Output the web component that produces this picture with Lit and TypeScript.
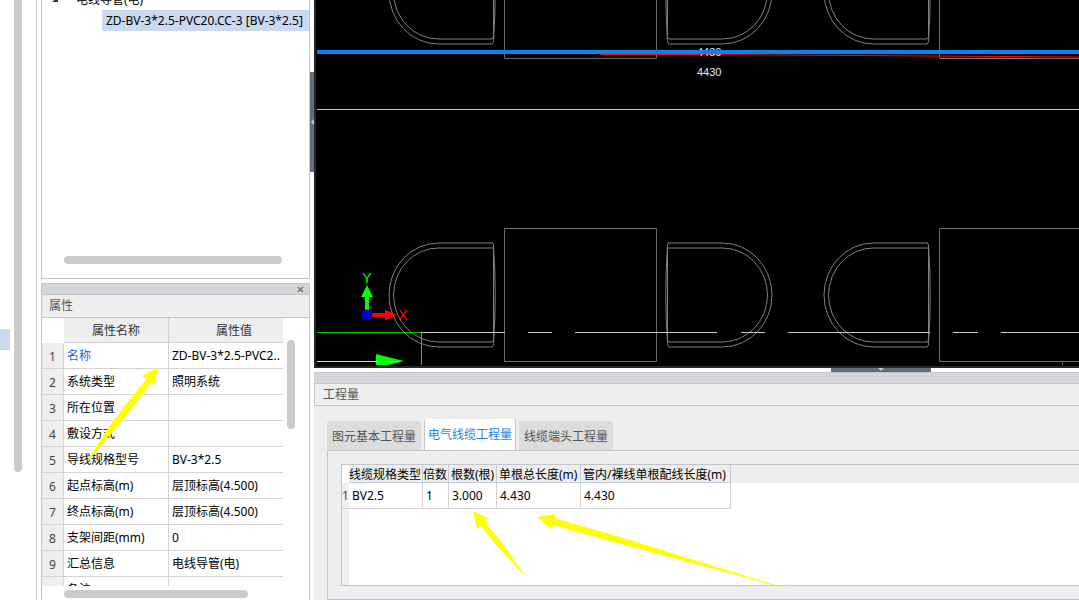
import { LitElement, html, svg, css } from "lit";
import { customElement, state } from "lit/decorators.js";

interface Prop {
  name: string;
  value: string;
  key?: boolean;
}

const PROPS: Prop[] = [
  { name: "名称", value: "ZD-BV-3*2.5-PVC2..", key: true },
  { name: "系统类型", value: "照明系统" },
  { name: "所在位置", value: "" },
  { name: "敷设方式", value: "" },
  { name: "导线规格型号", value: "BV-3*2.5" },
  { name: "起点标高(m)", value: "层顶标高(4.500)" },
  { name: "终点标高(m)", value: "层顶标高(4.500)" },
  { name: "支架间距(mm)", value: "0" },
  { name: "汇总信息", value: "电线导管(电)" },
  { name: "备注", value: "" },
];

const TABS = ["图元基本工程量", "电气线缆工程量", "线缆端头工程量"];

const base = css`
  * {
    box-sizing: border-box;
  }
  button {
    font: inherit;
    border: 0;
    padding: 0;
    margin: 0;
    cursor: pointer;
  }
  table {
    border-collapse: separate;
    border-spacing: 0;
    table-layout: fixed;
  }
  th,
  td {
    padding: 0;
    font-weight: 400;
    text-align: left;
    white-space: nowrap;
    overflow: hidden;
  }
  .thumb {
    background: #cbcbcb;
    border-radius: 4px;
  }
  .title {
    margin: 0;
    font-size: 12px;
    font-weight: 400;
    color: #555;
    background: #eee;
    height: 22px;
    line-height: 22px;
    padding-left: 8px;
  }
`;

@customElement("tree-panel")
class TreePanel extends LitElement {
  static styles = [
    base,
    css`
      :host {
        display: flex;
        flex-direction: column;
        overflow: hidden;
        border: 1px solid #c2c5ca;
        border-top: 0;
        background: #fff;
      }
      ul {
        list-style: none;
        margin: -11px 0 0;
        padding: 0;
        flex: 1;
      }
      li {
        display: flex;
        align-items: center;
        height: 21px;
        white-space: nowrap;
      }
      .parent {
        padding-left: 10px;
        gap: 18px;
      }
      .child {
        margin-left: 60px;
        padding-left: 4px;
        background: #c9d9f0;
      }
      .thumb {
        height: 8px;
        margin: 0 27px 14px 22px;
      }
    `,
  ];

  render() {
    return html`
      <ul>
        <li class="parent">
          <svg width="6" height="6" viewBox="0 0 6 6"><path d="M6 0V5H0z" fill="#333" /></svg>
          <span>电线导管(电)</span>
        </li>
        <li class="child">ZD-BV-3*2.5-PVC20.CC-3 [BV-3*2.5]</li>
      </ul>
      <div class="thumb"></div>
    `;
  }
}

@customElement("property-panel")
class PropertyPanel extends LitElement {
  static styles = [
    base,
    css`
      :host {
        display: flex;
        flex-direction: column;
        overflow: hidden;
        border: 1px solid #c2c5ca;
        border-bottom: 0;
        background: #fff;
      }
      .bar {
        display: flex;
        justify-content: flex-end;
        align-items: center;
        height: 11px;
        padding-right: 5px;
        background: #d3d5da;
        border-bottom: 1px solid #c2c5ca;
      }
      .close {
        display: flex;
        background: none;
      }
      .title {
        border-bottom: 1px solid #c2c5ca;
        height: 23px;
        padding-left: 7px;
      }
      .grid {
        flex: 1;
        display: flex;
        min-height: 0;
      }
      .view {
        flex: 1;
        min-width: 0;
        overflow: hidden;
      }
      table {
        width: 258px;
      }
      .c0 {
        width: 22px;
      }
      .c1 {
        width: 105px;
      }
      tr {
        height: 26px;
      }
      th,
      td {
        height: 26px;
        border-right: 1px solid #d3d3d3;
        border-bottom: 1px solid #d3d3d3;
        padding-left: 3px;
      }
      thead tr,
      thead td,
      thead th {
        height: 25px;
      }
      thead th {
        background: #eee;
        color: #333;
        text-align: center;
        padding: 2px 0 0;
      }
      thead td {
        border-color: #fff;
      }
      tbody th {
        background: #eee;
        color: #444;
        text-align: center;
        padding: 2px 0 0;
      }
      .key {
        color: #1a5fe8;
      }
      .v {
        width: 8px;
        height: 89px;
        margin: 22px 14px 0 4px;
      }
      .h {
        width: 184px;
        height: 8px;
        margin: 4px 0 2px 22px;
      }
    `,
  ];

  render() {
    return html`
      <div class="bar">
        <button class="close" aria-label="关闭">
          <svg width="7" height="7" viewBox="0 0 7 7">
            <path d="M1 1L6 6M6 1L1 6" stroke="#777" stroke-width="1.5" />
          </svg>
        </button>
      </div>
      <h2 class="title">属性</h2>
      <div class="grid">
        <div class="view">
          <table>
            <colgroup>
              <col class="c0" />
              <col class="c1" />
              <col />
            </colgroup>
            <thead>
              <tr>
                <td></td>
                <th scope="col">属性名称</th>
                <th scope="col">属性值</th>
              </tr>
            </thead>
            <tbody>
              ${PROPS.map(
                (p, i) => html`<tr>
                  <th scope="row">${i < 9 ? i + 1 : ""}</th>
                  <td class=${p.key ? "key" : ""}>${p.name}</td>
                  <td>${p.value}</td>
                </tr>`
              )}
            </tbody>
          </table>
        </div>
        <div class="thumb v"></div>
      </div>
      <div class="thumb h"></div>
    `;
  }
}

/* A chair in plan view with its straight back on the right, 107 x 104. */
const chair = (x: number, y: number, flip = false) => svg`
  <g transform="translate(${x} ${y})${flip ? " scale(-1 1)" : ""}">
    <path d="M104.5 .5H50A49.5 52 0 0 0 50 104.5H103.500Q105 104 105 101Q108.500 52 105 3Q105 .5 103.500 .5" />
    <path d="M104.500 5.500H50A44.500 46.500 0 0 0 50 99.500H103.500Q105 99 105 96V3" />
  </g>`;

@customElement("plan-view")
class PlanView extends LitElement {
  static styles = css`
    :host {
      display: block;
      min-height: 0;
      overflow: hidden;
      background: #000;
      border: 2px solid #26272b;
      border-width: 0 0 2px 2px;
    }
    svg {
      display: block;
      width: 100%;
      height: 100%;
    }
    .thin {
      fill: none;
      stroke: #808080;
      stroke-width: 1;
    }
    .desk {
      stroke: #6c6c6c;
    }
    .dim {
      font: 11px "Liberation Sans", sans-serif;
      fill: #e8e8e8;
    }
    .axis {
      font: 14px "Liberation Sans", sans-serif;
      text-anchor: middle;
    }
  `;

  render() {
    return html`
      <svg role="img" aria-label="平面图">
        <g transform="translate(-316 0)">
          <g class="thin">
            ${chair(388.5, 242.5)} ${chair(772.5, 242.5, true)} ${chair(823.5, 242.5)}
            ${chair(388.5, -60.5)} ${chair(772.5, -60.5, true)} ${chair(823.5, -60.5)}
            <path
              class="desk"
              d="M504.500 228.500H656.500V361.500H504.500zM504.500 -70V58.500H656.500V-70M2000 228.500H939.500V361.500H2000M939.500 -70V58.500H2000M1062.500 361V365"
            />
          </g>
          <path d="M317 109.500H2000" stroke="#c4c4c4" />
          <path d="M600 54.500L700 54.500L1079 57" stroke="#ff0000" fill="none" />
          <text class="dim" x="697" y="56">4430</text>
          <text class="dim" x="697" y="76">4430</text>
          <rect x="317" y="50" width="2000" height="4" fill="#0a80f5" />
          <path
            d="M421 332.500H505M528 332.500H552M575 332.500H717M741 332.500H765M788 332.500H930M953 332.500H978M1001 332.500H1143"
            stroke="#c8c8c8"
          />
          <path d="M317 332.500H421" stroke="#00c800" />
          <path d="M421.500 333V365" stroke="#00e800" />
          <path d="M376 354L404 361L388 365H376z" fill="#0f0" />
          <path d="M317 361.500H376" stroke="#d0d0d0" />
          <path d="M376 361.500H399" stroke="#a8ffa8" />
          <path d="M365 297H369V312H365zM367 285L373 297H361z" fill="#0f0" />
          <path d="M370 313H385V309.500L397 315L385 320.500V317H370z" fill="#f00" />
          <circle cx="367" cy="315" r="5.500" fill="#0000c0" />
          <text class="axis" x="367" y="283" fill="#0f0">Y</text>
          <text class="axis" x="403" y="320" fill="#f00">X</text>
        </g>
      </svg>
    `;
  }
}

@customElement("quantity-panel")
class QuantityPanel extends LitElement {
  @state() active = 1;

  static styles = [
    base,
    css`
      :host {
        display: flex;
        flex-direction: column;
        background: #eee;
        border: 1px solid #c2c5ca;
        border-width: 1px 0 0 0;
      }
      .bar {
        height: 11px;
        background: #d3d5da;
        border-bottom: 1px solid #c2c5ca;
      }
      .title {
        border: 1px solid #c2c5ca;
        border-width: 0 0 1px 1px;
      }
      .tabs {
        display: flex;
        align-items: flex-end;
        gap: 3px;
        padding: 13px 0 0 13px;
      }
      .tab {
        height: 29px;
        padding: 2px 5px 0;
        background: #dcdcdc;
        color: #555;
        border-radius: 2px 2px 0 0;
      }
      .tab.on {
        height: 31px;
        padding: 0 3px;
        background: #fff;
        color: #1f7fe0;
        border: 1px solid #c2c5ca;
        border-width: 0 1px;
      }
      .page {
        flex: 1;
        display: flex;
        margin-left: 13px;
        padding: 13px 0 13px 13px;
        border: 1px solid #c2c5ca;
        border-right: 0;
      }
      .sheet {
        flex: 1;
        border: 1px solid #c2c5ca;
        border-right: 0;
        background: linear-gradient(#eee 0 18px, transparent 18px),
          linear-gradient(90deg, #f0f0f0 0 7px, #fff 7px);
      }
      table {
        width: 389px;
      }
      .k0 {
        width: 7px;
      }
      .k1 {
        width: 74px;
      }
      .k2 {
        width: 26px;
      }
      .k3 {
        width: 48px;
      }
      .k4 {
        width: 84px;
      }
      thead th {
        height: 18px;
        line-height: 15px;
        padding: 2px 0 0 2px;
        background: #eee;
        border-right: 1px solid #c3cad8;
        border-bottom: 1px solid #c3cad8;
      }
      thead th.first {
        padding-left: 0;
      }
      thead td {
        background: #fff;
      }
      tbody th {
        color: #444;
        background: #eee;
      }
      tbody td {
        height: 26px;
        padding-left: 3px;
        background: #fff;
        border-right: 1px solid #d3d3d3;
      }
      tbody td,
      tbody th {
        border-bottom: 1px solid #d3d3d3;
      }
    `,
  ];

  render() {
    return html`
      <div class="bar"></div>
      <h2 class="title">工程量</h2>
      <div class="tabs" role="tablist">
        ${TABS.map(
          (t, i) => html`<button
            role="tab"
            class=${i === this.active ? "tab on" : "tab"}
            aria-selected=${i === this.active}
            @click=${() => (this.active = i)}
          >${t}</button>`
        )}
      </div>
      <div class="page" role="tabpanel">
        <div class="sheet">
          <table>
            <colgroup>
              <col class="k0" />
              <col class="k1" />
              <col class="k2" />
              <col class="k3" />
              <col class="k4" />
              <col />
            </colgroup>
            <thead>
              <tr>
                <td></td>
                <th class="first" scope="col">线缆规格类型</th>
                <th class="first" scope="col">倍数</th>
                <th scope="col">根数(根)</th>
                <th scope="col">单根总长度(m)</th>
                <th scope="col">管内/裸线单根配线长度(m)</th>
              </tr>
            </thead>
            <tbody>
              <tr>
                <th scope="row">1</th>
                <td>BV2.5</td>
                <td>1</td>
                <td>3.000</td>
                <td>4.430</td>
                <td>4.430</td>
              </tr>
            </tbody>
          </table>
        </div>
      </div>
    `;
  }
}

@customElement("app-root")
class AppRoot extends LitElement {
  static styles = [
    base,
    css`
      :host {
        position: relative;
        display: grid;
        grid-template-columns: 37px 273px 4px minmax(0, 1fr);
        height: 100vh;
        overflow: hidden;
        background: #fff;
        color: #000;
        font: 12px/18px "Noto Sans", "Noto Sans CJK SC", sans-serif;
      }
      .rail {
        display: flex;
        gap: 4px;
        border-right: 1px solid #c2c5ca;
      }
      .mark {
        width: 10px;
        height: 21px;
        margin-top: 329px;
        background: #c9d9f0;
      }
      .rail .thumb {
        width: 8px;
        height: 472px;
        border-radius: 0 0 4px 4px;
      }
      .left {
        display: flex;
        flex-direction: column;
        gap: 4px;
        padding-left: 4px;
        min-height: 0;
      }
      tree-panel {
        flex: 0 0 279px;
      }
      property-panel {
        flex: 1;
        min-height: 0;
      }
      .right {
        display: flex;
        flex-direction: column;
        min-height: 0;
      }
      plan-view {
        flex: 1;
      }
      .vsplit {
        padding-top: 72px;
      }
      .hsplit {
        height: 4px;
        padding-left: 517px;
      }
      .grip {
        display: flex;
        align-items: center;
        justify-content: center;
        background: #626d79;
      }
      .vsplit .grip {
        width: 4px;
        height: 100px;
      }
      .hsplit .grip {
        width: 100px;
        height: 4px;
      }
      quantity-panel {
        flex: 0 0 228px;
      }
      .arrows {
        position: absolute;
        inset: 0;
        width: 100%;
        height: 100%;
        pointer-events: none;
        fill: #ff0;
      }
    `,
  ];

  render() {
    return html`
      <div class="rail">
        <div class="mark"></div>
        <div class="thumb"></div>
      </div>
      <div class="left">
        <tree-panel></tree-panel>
        <property-panel></property-panel>
      </div>
      <div class="vsplit">
        <button class="grip" aria-label="折叠左侧">
          <svg width="4" height="6" viewBox="0 0 4 6"><path d="M4 0V6L1 3z" fill="#c4c8cd" /></svg>
        </button>
      </div>
      <div class="right">
        <plan-view></plan-view>
        <div class="hsplit">
          <button class="grip" aria-label="折叠下方">
            <svg width="6" height="4" viewBox="0 0 6 4"><path d="M0 0H6L3 3z" fill="#c4c8cd" /></svg>
          </button>
        </div>
        <quantity-panel></quantity-panel>
      </div>
      <svg class="arrows" aria-hidden="true">
        <path d="M158 367L142 376L146.500 379L113.500 420L88 459L90 459L122.700 420L151.500 382.500L154.500 385z" />
        <path d="M473 511L488.500 518.500L485 522L503 544L524 574L523 574L497 546L481 526L477 529z" />
        <path d="M537 517L555.500 514L554.500 518.500L610 534L792 590L610 541L553 525L551 529z" />
      </svg>
    `;
  }
}
